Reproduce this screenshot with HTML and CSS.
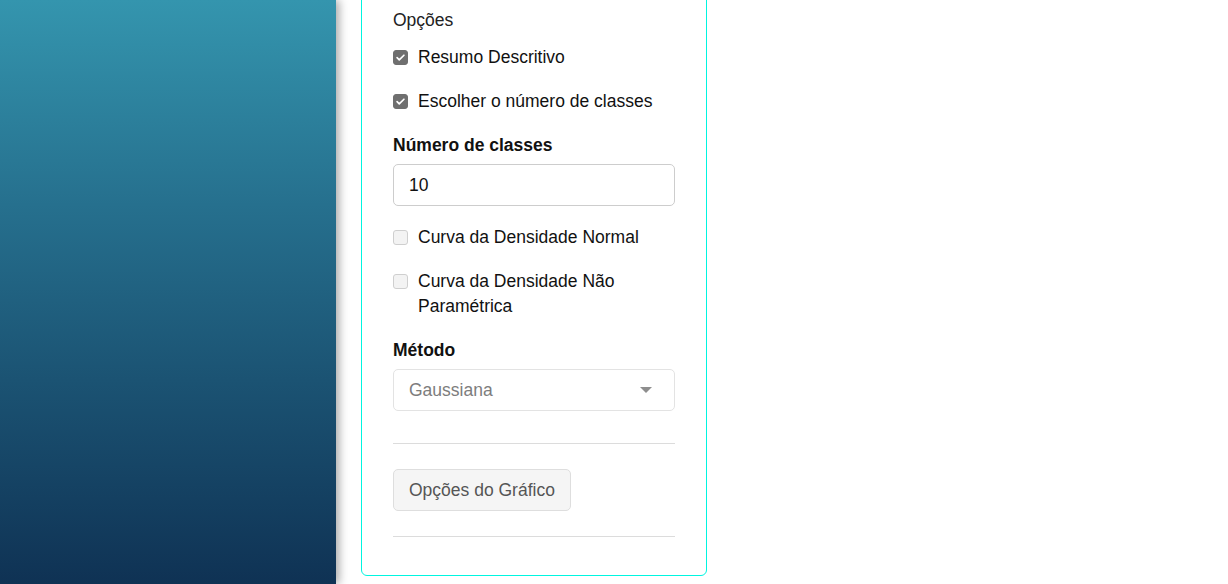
FILE: index.html
```html
<!DOCTYPE html>
<html lang="pt">
<head>
<meta charset="utf-8">
<link rel="stylesheet" href="styles.css">
</head>
<body>
<div class="layout">
  <aside class="sidebar"></aside>
  <main class="main">
    <section class="panel">
      <div class="group-title">Opções</div>
      <label class="check first"><span class="box checked"><svg viewBox="0 0 16 16" width="11" height="11"><path d="M3 8.3l3.2 3.2L13 4.7" fill="none" stroke="#fff" stroke-width="2.4" stroke-linecap="round" stroke-linejoin="round"/></svg></span><span class="text">Resumo Descritivo</span></label>
      <label class="check"><span class="box checked"><svg viewBox="0 0 16 16" width="11" height="11"><path d="M3 8.3l3.2 3.2L13 4.7" fill="none" stroke="#fff" stroke-width="2.4" stroke-linecap="round" stroke-linejoin="round"/></svg></span><span class="text">Escolher o número de classes</span></label>
      <div class="field-label">Número de classes</div>
      <div class="input">10</div>
      <label class="check"><span class="box"></span><span class="text">Curva da Densidade Normal</span></label>
      <label class="check"><span class="box"></span><span class="text">Curva da Densidade Não Paramétrica</span></label>
      <div class="field-label">Método</div>
      <div class="select"><span>Gaussiana</span><span class="caret"></span></div>
      <div class="rule first-rule"></div>
      <div class="button">Opções do Gráfico</div>
      <div class="rule second-rule"></div>
    </section>
  </main>
</div>
</body>
</html>
```

FILE: styles.css
```css
html, body {
  margin: 0;
  padding: 0;
  background: #fff;
  height: 100%;
  overflow: hidden;
}
body {
  font-family: "Liberation Sans", Arial, sans-serif;
  font-size: 17.5px;
  line-height: 25px;
  color: #111;
}
.layout {
  display: flex;
  height: 584px;
}
.sidebar {
  width: 336px;
  flex: none;
  background: linear-gradient(to bottom, #3495ae 0%, #26708e 35%, #1b5373 65%, #0f3254 100%);
  box-shadow: 3px 0 9px rgba(0, 0, 0, 0.35);
  position: relative;
  z-index: 1;
}
.main {
  padding-left: 25px;
}
.panel {
  width: 282px;
  margin-top: -21px;
  padding: 28px 31px 38px 31px;
  border: 1px solid #00f5e0;
  border-radius: 6px;
  display: flex;
  flex-direction: column;
  align-items: flex-start;
}
.group-title {
  color: #222;
}
.check {
  display: flex;
  align-items: flex-start;
  margin-top: 19px;
  width: 100%;
}
.check.first {
  margin-top: 12px;
}
.box {
  width: 13px;
  height: 13px;
  flex: none;
  margin-top: 5px;
  margin-right: 10px;
  border: 1px solid #cfcfcf;
  border-radius: 3px;
  background: #f3f3f3;
  display: flex;
  align-items: center;
  justify-content: center;
}
.box.checked {
  background: #6f6f6f;
  border-color: #6f6f6f;
}
.text {
  color: #111;
}
.field-label {
  font-weight: bold;
  margin-top: 19px;
}
.input, .select {
  box-sizing: border-box;
  width: 282px;
  height: 42px;
  margin-top: 6px;
  padding: 0 15px;
  border: 1px solid #cdcdcd;
  border-radius: 5px;
  display: flex;
  align-items: center;
}
.select {
  border-color: #e3e3e3;
  color: #7d7d7d;
  justify-content: space-between;
  padding-right: 22px;
}
.caret {
  width: 0;
  height: 0;
  border-left: 6px solid transparent;
  border-right: 6px solid transparent;
  border-top: 6px solid #8e8e8e;
}
.rule {
  width: 282px;
  height: 1px;
  background: #dcdcdc;
}
.first-rule {
  margin-top: 32px;
}
.second-rule {
  margin-top: 25px;
}
.button {
  margin-top: 25px;
  box-sizing: border-box;
  height: 42px;
  padding: 0 15px;
  display: flex;
  align-items: center;
  background: #f5f5f5;
  border: 1px solid #dedede;
  border-radius: 5px;
  color: #555;
}
```
